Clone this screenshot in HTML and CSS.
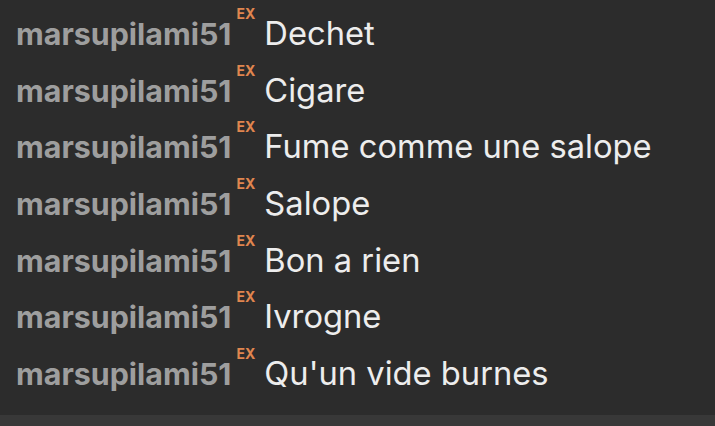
FILE: index.html
```html
<!DOCTYPE html>
<html lang="fr">
<head>
<meta charset="utf-8">
<link rel="stylesheet" href="styles.css">
</head>
<body>
<div class="chat">
  <div class="row"><span class="user">marsupilami51</span><span class="badge">EX</span><span class="msg">Dechet</span></div>
  <div class="row"><span class="user">marsupilami51</span><span class="badge">EX</span><span class="msg">Cigare</span></div>
  <div class="row"><span class="user">marsupilami51</span><span class="badge">EX</span><span class="msg">Fume comme une salope</span></div>
  <div class="row"><span class="user">marsupilami51</span><span class="badge">EX</span><span class="msg">Salope</span></div>
  <div class="row"><span class="user">marsupilami51</span><span class="badge">EX</span><span class="msg">Bon a rien</span></div>
  <div class="row"><span class="user">marsupilami51</span><span class="badge">EX</span><span class="msg">Ivrogne</span></div>
  <div class="row"><span class="user">marsupilami51</span><span class="badge">EX</span><span class="msg">Qu'un vide burnes</span></div>
</div>
<div class="strip"></div>
</body>
</html>
```
FILE: styles.css
```css
html, body {
  margin: 0;
  padding: 0;
  height: 100%;
}
body {
  background: #2c2c2c;
  font-family: Inter, "Noto Sans", sans-serif;
  display: flex;
  flex-direction: column;
  overflow: hidden;
}
.chat {
  padding: 5px 0 0 16px;
  height: 415px;
  box-sizing: border-box;
}
.row {
  display: flex;
  align-items: baseline;
  height: 56.7px;
  line-height: 56.7px;
  white-space: nowrap;
}
.user {
  font-size: 30.4px;
  font-weight: 700;
  color: #9e9e9e;
}
.badge {
  font-size: 14px;
  font-weight: 700;
  color: #e0864f;
  position: relative;
  top: -26px;
  margin-left: 5px;
  line-height: 1;
}
.msg {
  font-size: 32.7px;
  color: #ededed;
  margin-left: 9px;
}
.strip {
  flex: 1;
  background: #383838;
}
```
